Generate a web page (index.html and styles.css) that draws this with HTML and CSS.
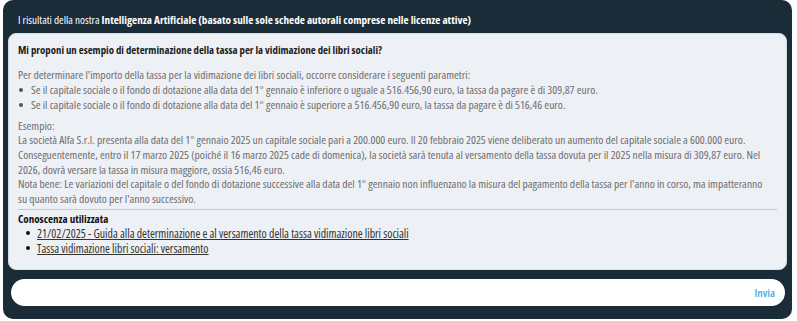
FILE: index.html
```html
<!DOCTYPE html>
<html>
<head>
    <title>Intelligenza Artificiale</title>
    <link rel="stylesheet" href="styles.css">
</head>
<body>
    <div class="panel">
        <div class="head">I risultati della nostra <b>Intelligenza Artificiale (basato sulle sole schede autorali comprese nelle licenze attive)</b></div>

        <div class="card">
            <div class="question">Mi proponi un esempio di determinazione della tassa per la vidimazione dei libri sociali?</div>

            <div class="answer">
                <p>Per determinare l'importo della tassa per la vidimazione dei libri sociali, occorre considerare i seguenti parametri:</p>
                <ul class="points">
                    <li>Se il capitale sociale o il fondo di dotazione alla data del 1° gennaio è inferiore o uguale a 516.456,90 euro, la tassa da pagare è di 309,87 euro.</li>
                    <li>Se il capitale sociale o il fondo di dotazione alla data del 1° gennaio è superiore a 516.456,90 euro, la tassa da pagare è di 516,46 euro.</li>
                </ul>
                <p class="example">Esempio:<br>
                La società Alfa S.r.l. presenta alla data del 1° gennaio 2025 un capitale sociale pari a 200.000 euro. Il 20 febbraio 2025 viene deliberato un aumento del capitale sociale a 600.000 euro.<br>
                Conseguentemente, entro il 17 marzo 2025 (poiché il 16 marzo 2025 cade di domenica), la società sarà tenuta al versamento della tassa dovuta per il 2025 nella misura di 309,87 euro. Nel<br>
                2026, dovrà versare la tassa in misura maggiore, ossia 516,46 euro.<br>
                Nota bene: Le variazioni del capitale o del fondo di dotazione successive alla data del 1° gennaio non influenzano la misura del pagamento della tassa per l'anno in corso, ma impatteranno<br>
                su quanto sarà dovuto per l'anno successivo.</p>
            </div>

            <div class="sources">
                <div class="sources-title">Conoscenza utilizzata</div>
                <ul class="links">
                    <li><a href="#">21/02/2025 - Guida alla determinazione e al versamento della tassa vidimazione libri sociali</a></li>
                    <li><a href="#">Tassa vidimazione libri sociali: versamento</a></li>
                </ul>
            </div>
        </div>

        <div class="ask">
            <input type="text" class="ask-input">
            <button class="send">Invia</button>
        </div>
    </div>
</body>
</html>
```
FILE: styles.css
```css
body {
    margin: 0;
    background-color: #fff;
    font-family: "Open Sans", "Liberation Sans", sans-serif;
    font-stretch: condensed;
    font-size: 11.2px;
    line-height: 14.7px;
}
.panel {
    margin: 0 5px 3px 3px;
    padding: 13px 5px 13px 5px;
    background-color: #1a2c38;
    border-radius: 10px;
}
.head {
    color: #fff;
    padding: 0 10px 5px 10px;
}
.head b {
    font-weight: 700;
}
.card {
    background-color: #edf0f5;
    border: 1px solid #d6dbe2;
    border-radius: 8px;
    padding: 9px 9px 13px 9px;
}
.question {
    color: #1d1d1d;
    font-size: 10.8px;
    font-weight: 700;
}
.answer {
    color: #6e6e6e;
    font-size: 11.6px;
    margin-top: 11px;
}
.answer p {
    margin: 0;
    white-space: nowrap;
}
.points, .links {
    list-style: none;
    margin: 0;
    padding: 0;
}
.points li {
    position: relative;
    padding-left: 13px;
    white-space: nowrap;
}
.points li::before {
    content: "";
    position: absolute;
    left: 1px;
    top: 5px;
    width: 4px;
    height: 4px;
    border-radius: 50%;
    background-color: #555;
}
.answer .example {
    margin-top: 6px;
}
.sources {
    margin-top: 2px;
    border-top: 1px solid #c9cdd3;
    padding-top: 2px;
}
.sources-title {
    color: #111;
    font-size: 11px;
    font-weight: 700;
}
.links {
    font-size: 11.8px;
}
.links li {
    position: relative;
    padding-left: 19px;
}
.links li::before {
    content: "";
    position: absolute;
    left: 8px;
    top: 5px;
    width: 4px;
    height: 4px;
    border-radius: 50%;
    background-color: #111;
}
.links a {
    color: #333;
    text-decoration: underline;
}
.ask {
    display: flex;
    align-items: center;
    margin: 9px 2px 0 3px;
    height: 27px;
    background-color: #fff;
    border-radius: 14px;
}
.ask-input {
    flex: 1;
    border: none;
    outline: none;
    background: transparent;
    margin-left: 12px;
}
.send {
    background: none;
    border: none;
    color: #4aa7de;
    font-family: inherit;
    font-stretch: condensed;
    font-size: 11.5px;
    font-weight: 600;
    padding: 0 10px 0 6px;
    cursor: pointer;
}
```
